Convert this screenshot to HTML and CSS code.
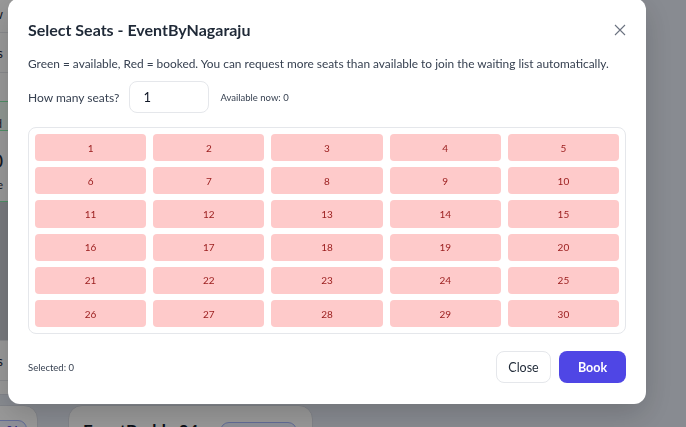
FILE: index.html
```html
<!DOCTYPE html>
<html lang="en">
<head>
<meta charset="utf-8">
<title>Select Seats</title>
<link rel="stylesheet" href="styles.css">
</head>
<body>
<div class="page">
  <div class="cards">
    <div class="card card-tall">
      <div class="crow crow-top">Overview</div>
      <div class="crow">Seats</div>
      <div class="crow crow-blank"></div>
      <div class="crow crow-green">Reserved</div>
      <div class="crow crow-big">0</div>
      <div class="crow crow-sub">Available</div>
      <div class="crow crow-dark"></div>
      <div class="crow">Seats</div>
    </div>
    <div class="card card-tall"></div>
    <div class="card card-tall"></div>
    <div class="card card-short card-end"><span class="badge">org of user04</span></div>
    <div class="card card-short">
      <div class="card-head">
        <span class="card-title">EventBuddy 04</span>
        <span class="badge">org of user04</span>
      </div>
    </div>
  </div>
</div>

<div class="overlay">
  <div class="modal">
    <div class="modal-head">
      <h2 class="modal-title">Select Seats - EventByNagaraju</h2>
      <button class="icon-close" aria-label="Close">
        <svg width="12" height="12" viewBox="0 0 12 12"><path d="M1 1L11 11M11 1L1 11" stroke="#6b7280" stroke-width="1.1" fill="none"/></svg>
      </button>
    </div>
    <p class="desc">Green = available, Red = booked. You can request more seats than available to join the waiting list automatically.</p>
    <div class="qty-row">
      <label class="qty-label">How many seats?</label>
      <input class="qty-input" type="text" value="1">
      <span class="avail">Available now: 0</span>
    </div>
    <div class="seat-box">
      <div class="seat">1</div><div class="seat">2</div><div class="seat">3</div><div class="seat">4</div><div class="seat">5</div>
      <div class="seat">6</div><div class="seat">7</div><div class="seat">8</div><div class="seat">9</div><div class="seat">10</div>
      <div class="seat">11</div><div class="seat">12</div><div class="seat">13</div><div class="seat">14</div><div class="seat">15</div>
      <div class="seat">16</div><div class="seat">17</div><div class="seat">18</div><div class="seat">19</div><div class="seat">20</div>
      <div class="seat">21</div><div class="seat">22</div><div class="seat">23</div><div class="seat">24</div><div class="seat">25</div>
      <div class="seat">26</div><div class="seat">27</div><div class="seat">28</div><div class="seat">29</div><div class="seat">30</div>
    </div>
    <div class="modal-foot">
      <span class="selected">Selected: 0</span>
      <div class="actions">
        <button class="btn btn-ghost">Close</button>
        <button class="btn btn-primary">Book</button>
      </div>
    </div>
  </div>
</div>
</body>
</html>
```
FILE: styles.css
```css
* { box-sizing: border-box; }
html, body { margin: 0; padding: 0; overflow: hidden; }
body {
  width: 686px;
  height: 427px;
  background: #e3e8f2;
  font-family: "Lato", "Open Sans", sans-serif;
  color: #1f2937;
}

.page { height: 427px; overflow: hidden; }
.cards {
  display: grid;
  grid-template-columns: repeat(3, 245px);
  column-gap: 30px;
  row-gap: 10px;
  margin-left: -207px;
  margin-top: -5px;
}
.card {
  background: #fff;
  border-radius: 14px;
  border: 1px solid #d8dce6;
  padding: 14px;
}
.card-short { height: 60px; padding: 10px 14px; }
.card-end { text-align: right; padding: 11px 10px 0 0; }
.card-tall { height: 400px; padding: 0; }
.crow {
  text-align: right;
  padding-right: 34px;
  font-size: 13px;
  height: 40px;
  line-height: 40px;
  border-bottom: 1px solid #e5e7eb;
}
.crow-top { height: 37px; line-height: 36px; }
.crow-blank { height: 28px; border: 0; }
.crow-green { height: 30px; line-height: 44px; border: 1px solid #86efac; background: #f0fdf4; font-size: 11px; }
.crow-big { font-size: 20px; height: 46px; line-height: 58px; border: 0; }
.crow-sub { height: 24px; line-height: 16px; font-size: 12px; border: 0; }
.crow-dark { height: 140px; background: #c9ccd3; border-top: 1px solid #86efac; }
.card-head { display: flex; justify-content: space-between; align-items: center; padding-top: 4px; }
.card-title { font-size: 17px; font-weight: 700; color: #111827; }
.badge {
  font-size: 10px;
  color: #4338ca;
  border: 1px solid #a5b4fc;
  background: #eef2ff;
  border-radius: 999px;
  padding: 2px 8px;
}
.card-head .badge { margin-right: 1px; }

.overlay {
  position: fixed;
  inset: 0;
  background: rgba(0, 0, 0, 0.4);
  padding-left: 8px;
}
.modal {
  width: 638px;
  height: 406px;
  margin-top: -2px;
  background: #fff;
  border-radius: 12px;
  padding: 20px 20px 21px 20px;
  box-shadow: 0 10px 30px rgba(0,0,0,0.18);
  display: flex;
  flex-direction: column;
}
.modal-head {
  display: flex;
  justify-content: space-between;
  align-items: center;
  height: 24px;
}
.modal-title {
  margin: 0;
  font-size: 16px;
  font-weight: 700;
  line-height: 24px;
  color: #1f2937;
}
.icon-close {
  border: 0;
  background: none;
  padding: 0;
  width: 12px;
  height: 12px;
  display: flex;
}
.desc {
  margin: 13px 0 0;
  font-size: 11.9px;
  line-height: 18px;
  color: #374151;
  white-space: nowrap;
}
.qty-row {
  display: flex;
  align-items: center;
  margin-top: 8px;
  height: 32px;
}
.qty-label { font-size: 12px; color: #374151; }
.qty-input {
  margin-left: 10px;
  width: 80px;
  height: 32px;
  border: 1px solid #e5e7eb;
  border-radius: 8px;
  padding: 0 13px;
  font-family: inherit;
  font-size: 13px;
  color: #111827;
  outline: none;
}
.avail { margin-left: 11px; font-size: 9.5px; color: #374151; }

.seat-box {
  margin-top: 14px;
  border: 1px solid #e5e7eb;
  border-radius: 8px;
  padding: 6px;
  display: grid;
  grid-template-columns: repeat(5, 1fr);
  grid-auto-rows: 27.2px;
  column-gap: 7px;
  row-gap: 6px;
}
.seat {
  background: #fecaca;
  color: #991b1b;
  border-radius: 4px;
  font-size: 10px;
  display: flex;
  align-items: center;
  justify-content: center;
}

.modal-foot {
  margin-top: 17px;
  display: flex;
  justify-content: space-between;
  align-items: center;
}
.selected { font-size: 9.5px; color: #374151; }
.actions { display: flex; gap: 8px; }
.btn {
  height: 32px;
  border-radius: 8px;
  font-family: inherit;
  font-size: 12.5px;
  cursor: pointer;
}
.btn-ghost {
  width: 55px;
  background: #fff;
  border: 1px solid #e5e7eb;
  color: #1f2937;
}
.btn-primary {
  width: 67px;
  background: #4f46e5;
  border: 0;
  color: #fff;
  font-weight: 700;
}
```
